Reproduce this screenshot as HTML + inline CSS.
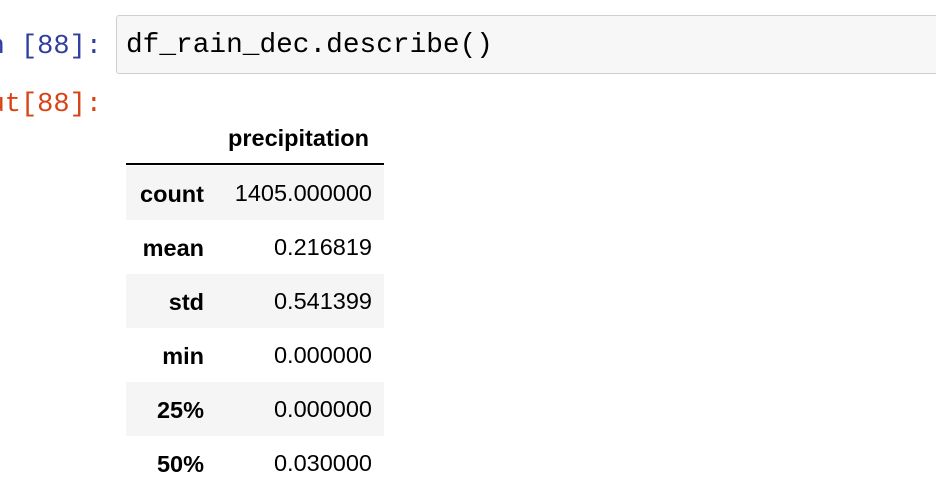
<!DOCTYPE html>
<html><head><style>
body{margin:0;width:936px;height:480px;overflow:hidden;background:#fff;position:relative;font-family:"Liberation Sans",sans-serif}
.p{position:absolute;right:834px;font-family:"Liberation Mono",monospace;font-size:27px;white-space:nowrap;line-height:32px}
.box{position:absolute;left:116px;top:15px;width:840px;height:57px;border:1px solid #cfcfcf;border-radius:3px;background:#f7f7f7}
.code{position:absolute;left:126px;top:30px;font-family:"Liberation Mono",monospace;font-size:27.8px;line-height:32px;color:#000}
.row{position:absolute;left:126px;width:258px;height:54px}
.sh{background:#f5f5f5}
.i{position:absolute;right:180px;top:1px;line-height:54px;font-weight:bold;font-size:23.5px;color:#000}
.v{position:absolute;right:12px;top:0;line-height:54px;font-size:23.5px;color:#000}
</style></head><body>
<div class="p" style="top:31px;color:#303f9f">In [88]:</div>
<div class="box"></div>
<div class="code">df_rain_dec.describe()</div>
<div class="p" style="top:89px;color:#d84315">Out[88]:</div>
<div style="position:absolute;left:228px;top:124px;font-weight:bold;font-size:23.5px;line-height:28px">precipitation</div>
<div style="position:absolute;left:126px;top:163px;width:258px;height:2px;background:#000"></div>
<div class="row sh" style="top:166px"><span class="i">count</span><span class="v">1405.000000</span></div>
<div class="row" style="top:220px"><span class="i">mean</span><span class="v">0.216819</span></div>
<div class="row sh" style="top:274px"><span class="i">std</span><span class="v">0.541399</span></div>
<div class="row" style="top:328px"><span class="i">min</span><span class="v">0.000000</span></div>
<div class="row sh" style="top:382px"><span class="i">25%</span><span class="v">0.000000</span></div>
<div class="row" style="top:436px"><span class="i">50%</span><span class="v">0.030000</span></div>
</body></html>
